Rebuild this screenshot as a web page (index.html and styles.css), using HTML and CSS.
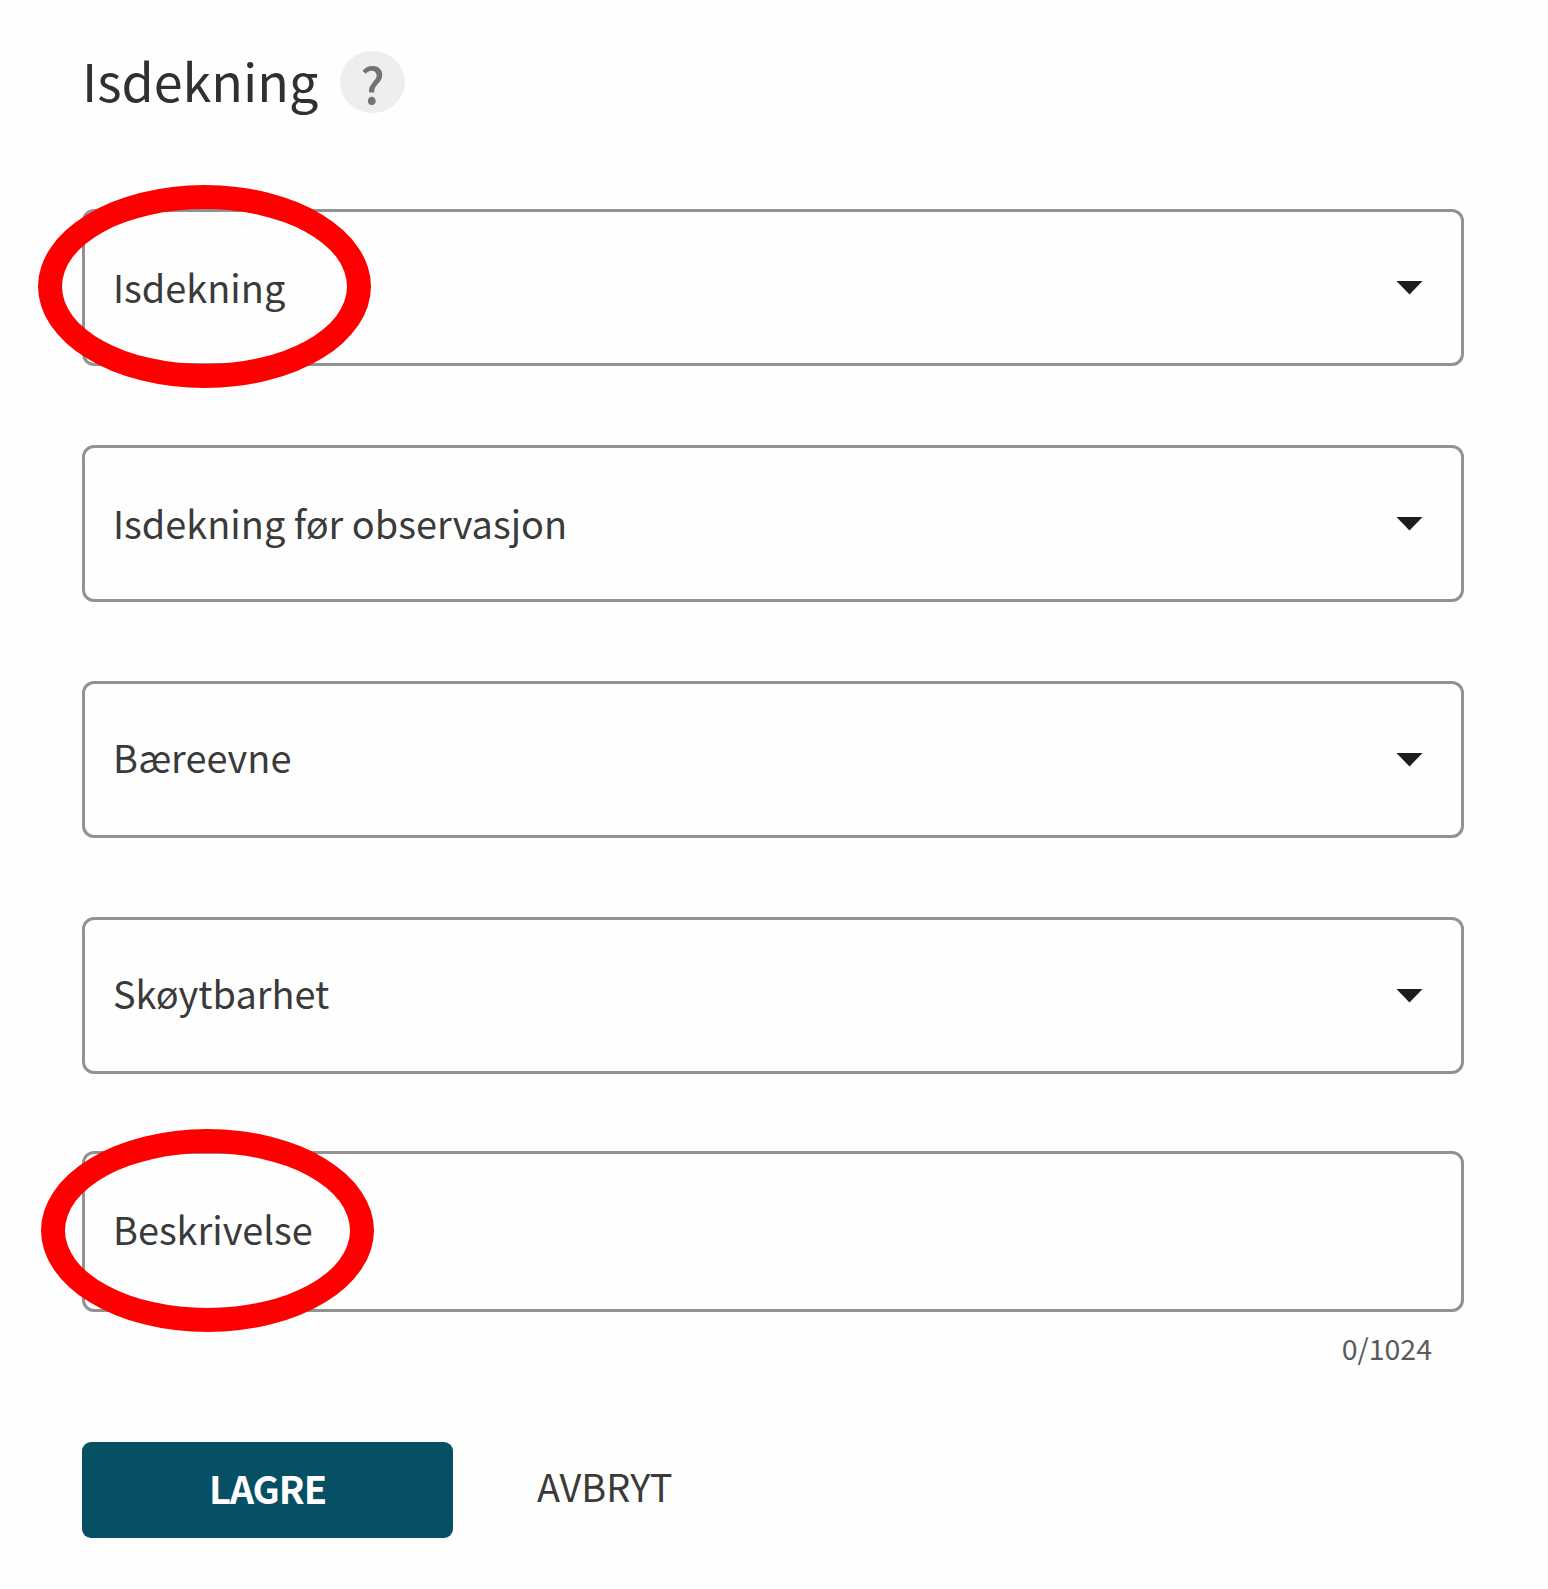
FILE: index.html
```
<!DOCTYPE html>
<html lang="no">

<head>
    <meta charset="UTF-8">
    <meta name="viewport" content="width=device-width, initial-scale=1.0">
    <title>Isdekning</title>
    <link rel="stylesheet" href="styles.css">
</head>

<body>
    <form class="ice-form">
        <div class="header">
            <h1 class="title">Isdekning</h1>
            <span class="help">?</span>
        </div>

        <div class="field">
            <span class="label">Isdekning</span>
            <span class="arrow"></span>
            <span class="ring"></span>
        </div>
        <div class="field">
            <span class="label">Isdekning før observasjon</span>
            <span class="arrow"></span>
        </div>
        <div class="field raised">
            <span class="label">Bæreevne</span>
            <span class="arrow"></span>
        </div>
        <div class="field raised">
            <span class="label">Skøytbarhet</span>
            <span class="arrow"></span>
        </div>
        <div class="field comment raised">
            <span class="label">Beskrivelse</span>
            <span class="ring"></span>
        </div>
        <div class="counter">0/1024</div>

        <div class="actions">
            <button type="button" class="save">LAGRE</button>
            <button type="button" class="cancel">AVBRYT</button>
        </div>
    </form>
</body>

</html>
```
FILE: styles.css
```
* {
    box-sizing: border-box;
}

body {
    margin: 0;
    background-color: #fefefe;
    color: #3a3a3a;
    font-family: "Noto Sans CJK SC", "Open Sans", sans-serif;
}

.ice-form {
    width: 1382px;
    margin-left: 82px;
    padding-top: 42px;
}

.header {
    display: flex;
    align-items: center;
    height: 80px;
    margin-bottom: 87px;
}

.title {
    width: 258px;
    margin: 0;
    padding-bottom: 5px;
    font-size: 52px;
    line-height: 75px;
    font-weight: 400;
    white-space: nowrap;
    color: #303030;
}

.help {
    width: 65px;
    height: 62px;
    border-radius: 50%;
    background-color: #eeeeee;
    color: #737373;
    font-size: 50px;
    font-weight: 500;
    line-height: 62px;
    text-align: center;
}

.field {
    position: relative;
    display: flex;
    align-items: center;
    justify-content: space-between;
    height: 157px;
    margin-bottom: 79px;
    padding: 0 38px 0 28px;
    border: 3px solid #929292;
    border-radius: 12px;
}

.label {
    margin-bottom: 1px;
    font-size: 37.9px;
    line-height: 60px;
    white-space: nowrap;
}

.raised .label {
    margin-bottom: 6px;
}

.arrow {
    width: 27px;
    height: 14px;
    background-color: #1d1d1d;
    clip-path: polygon(0 0, 100% 0, 50% 100%);
}

.comment {
    height: 161px;
    margin-top: -2px;
    margin-bottom: 0;
}

/* red ring around the highlighted fields */
.ring {
    position: absolute;
    left: -47px;
    top: -27px;
    width: 333px;
    height: 203px;
    border: 24px solid #ff0000;
    border-radius: 50%;
}

.comment .ring {
    left: -44px;
    top: -25px;
}

.counter {
    height: 60px;
    margin-top: 6px;
    padding-right: 32px;
    font-size: 28.5px;
    line-height: 60px;
    text-align: right;
    color: #5a5a5a;
}

.actions {
    display: flex;
    margin-top: 64px;
}

.save,
.cancel {
    height: 96px;
    padding: 0 0 4px;
    border: 0;
    font-family: inherit;
    line-height: 60px;
}

.save {
    width: 371px;
    border-radius: 9px;
    background-color: #055065;
    color: #ffffff;
    font-size: 38px;
    font-weight: 700;
    letter-spacing: -1px;
}

.cancel {
    margin-left: 84px;
    padding-bottom: 8px;
    background: none;
    color: #3a3a3a;
    font-size: 37.9px;
}
```
